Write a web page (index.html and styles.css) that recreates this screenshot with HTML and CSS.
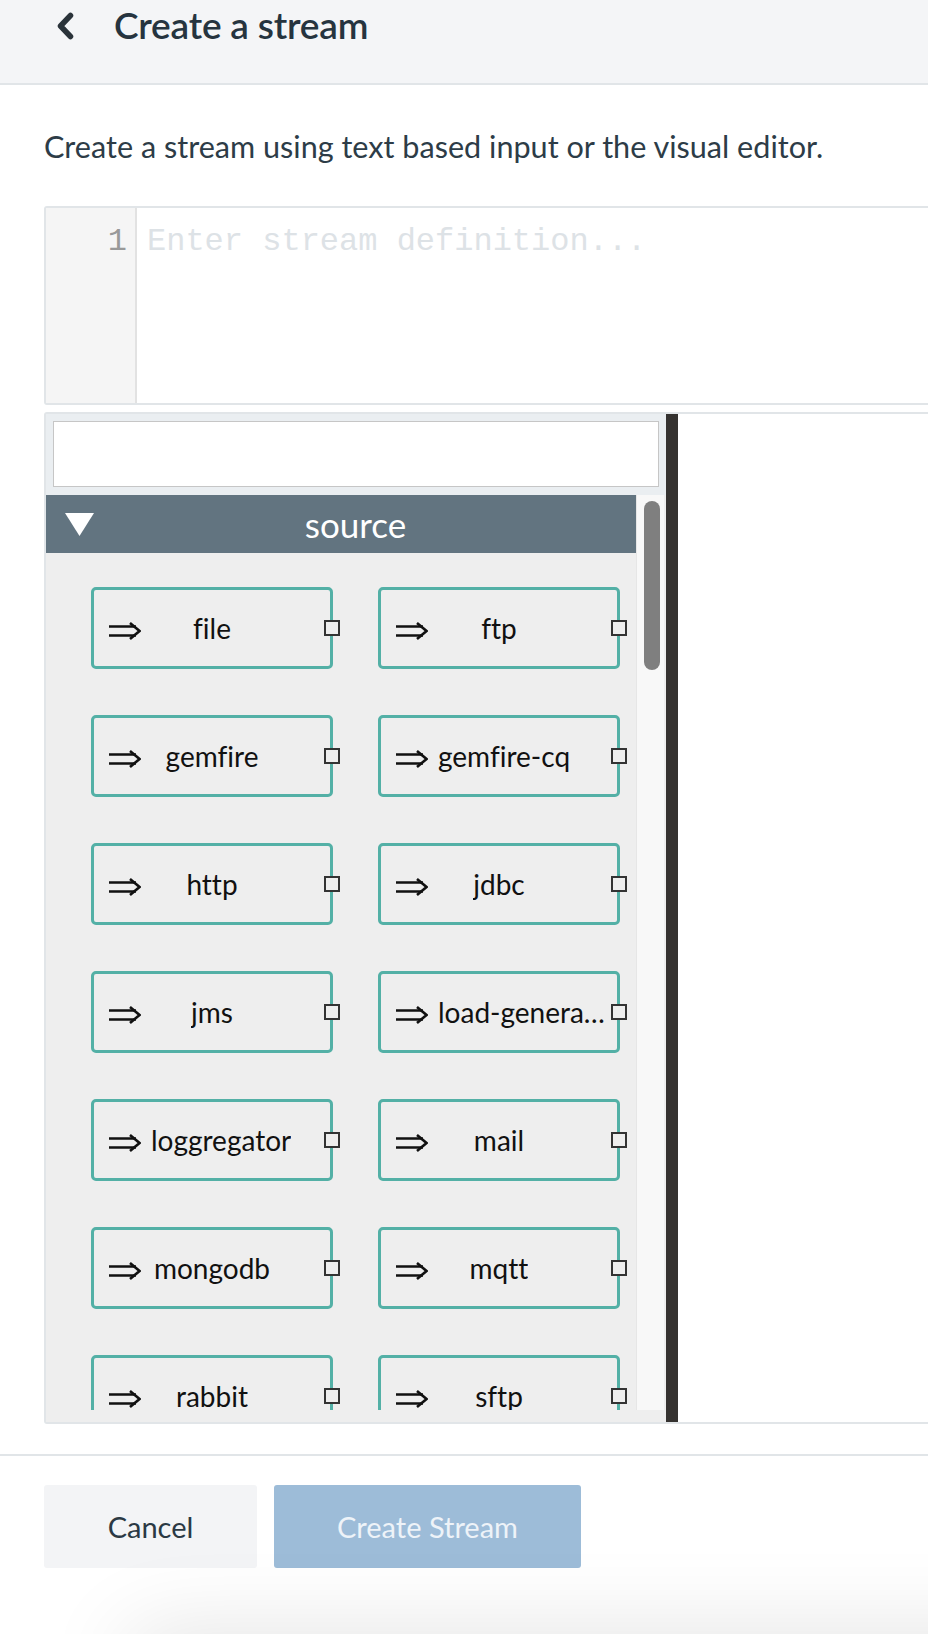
FILE: index.html
```html
<!DOCTYPE html>
<html lang="en">
<head>
<meta charset="utf-8">
<title>Create a stream</title>
<link rel="stylesheet" href="styles.css">
</head>
<body>
<div class="page">
  <header class="topbar">
    <svg class="back" width="20" height="28" viewBox="0 0 20 28" aria-hidden="true">
      <polyline points="15.5,3.5 5.5,14 15.5,24.5" fill="none" stroke="#2a333a" stroke-width="5.5" stroke-linecap="round" stroke-linejoin="round"/>
    </svg>
    <h1 class="title">Create a stream</h1>
  </header>

  <p class="intro">Create a stream using text based input or the visual editor.</p>

  <div class="editor">
    <div class="gutter"><span class="lineno">1</span></div>
    <div class="code"><span class="placeholder">Enter stream definition...</span></div>
  </div>

  <div class="flow">
    <div class="palette">
      <div class="search"><input class="search-input" type="text" aria-label="Filter"></div>
      <div class="palette-body">
        <div class="list">
          <div class="group-header">
            <svg class="caret" width="29" height="23" viewBox="0 0 29 23" aria-hidden="true"><polygon points="0,0 29,0 14.5,23" fill="#ffffff"/></svg>
            <span class="group-name">source</span>
          </div>
          <div class="nodes">
            <div class="node"><span class="node-icon"><svg width="32" height="18" viewBox="0 0 32 18"><path d="M0 4.5H27M0 13.5H27" stroke="#111" stroke-width="2.3"/><polyline points="21,1 30.5,9 21,17" fill="none" stroke="#111" stroke-width="2.6"/></svg></span><span class="node-label">file</span><span class="node-pad"></span><span class="port"></span></div>
            <div class="node"><span class="node-icon"><svg width="32" height="18" viewBox="0 0 32 18"><path d="M0 4.5H27M0 13.5H27" stroke="#111" stroke-width="2.3"/><polyline points="21,1 30.5,9 21,17" fill="none" stroke="#111" stroke-width="2.6"/></svg></span><span class="node-label">ftp</span><span class="node-pad"></span><span class="port"></span></div>
            <div class="node"><span class="node-icon"><svg width="32" height="18" viewBox="0 0 32 18"><path d="M0 4.5H27M0 13.5H27" stroke="#111" stroke-width="2.3"/><polyline points="21,1 30.5,9 21,17" fill="none" stroke="#111" stroke-width="2.6"/></svg></span><span class="node-label">gemfire</span><span class="node-pad"></span><span class="port"></span></div>
            <div class="node"><span class="node-icon"><svg width="32" height="18" viewBox="0 0 32 18"><path d="M0 4.5H27M0 13.5H27" stroke="#111" stroke-width="2.3"/><polyline points="21,1 30.5,9 21,17" fill="none" stroke="#111" stroke-width="2.6"/></svg></span><span class="node-label">gemfire-cq</span><span class="node-pad"></span><span class="port"></span></div>
            <div class="node"><span class="node-icon"><svg width="32" height="18" viewBox="0 0 32 18"><path d="M0 4.5H27M0 13.5H27" stroke="#111" stroke-width="2.3"/><polyline points="21,1 30.5,9 21,17" fill="none" stroke="#111" stroke-width="2.6"/></svg></span><span class="node-label">http</span><span class="node-pad"></span><span class="port"></span></div>
            <div class="node"><span class="node-icon"><svg width="32" height="18" viewBox="0 0 32 18"><path d="M0 4.5H27M0 13.5H27" stroke="#111" stroke-width="2.3"/><polyline points="21,1 30.5,9 21,17" fill="none" stroke="#111" stroke-width="2.6"/></svg></span><span class="node-label">jdbc</span><span class="node-pad"></span><span class="port"></span></div>
            <div class="node"><span class="node-icon"><svg width="32" height="18" viewBox="0 0 32 18"><path d="M0 4.5H27M0 13.5H27" stroke="#111" stroke-width="2.3"/><polyline points="21,1 30.5,9 21,17" fill="none" stroke="#111" stroke-width="2.6"/></svg></span><span class="node-label">jms</span><span class="node-pad"></span><span class="port"></span></div>
            <div class="node"><span class="node-icon"><svg width="32" height="18" viewBox="0 0 32 18"><path d="M0 4.5H27M0 13.5H27" stroke="#111" stroke-width="2.3"/><polyline points="21,1 30.5,9 21,17" fill="none" stroke="#111" stroke-width="2.6"/></svg></span><span class="node-label">load-generator</span><span class="node-pad"></span><span class="port"></span></div>
            <div class="node"><span class="node-icon"><svg width="32" height="18" viewBox="0 0 32 18"><path d="M0 4.5H27M0 13.5H27" stroke="#111" stroke-width="2.3"/><polyline points="21,1 30.5,9 21,17" fill="none" stroke="#111" stroke-width="2.6"/></svg></span><span class="node-label">loggregator</span><span class="node-pad"></span><span class="port"></span></div>
            <div class="node"><span class="node-icon"><svg width="32" height="18" viewBox="0 0 32 18"><path d="M0 4.5H27M0 13.5H27" stroke="#111" stroke-width="2.3"/><polyline points="21,1 30.5,9 21,17" fill="none" stroke="#111" stroke-width="2.6"/></svg></span><span class="node-label">mail</span><span class="node-pad"></span><span class="port"></span></div>
            <div class="node"><span class="node-icon"><svg width="32" height="18" viewBox="0 0 32 18"><path d="M0 4.5H27M0 13.5H27" stroke="#111" stroke-width="2.3"/><polyline points="21,1 30.5,9 21,17" fill="none" stroke="#111" stroke-width="2.6"/></svg></span><span class="node-label">mongodb</span><span class="node-pad"></span><span class="port"></span></div>
            <div class="node"><span class="node-icon"><svg width="32" height="18" viewBox="0 0 32 18"><path d="M0 4.5H27M0 13.5H27" stroke="#111" stroke-width="2.3"/><polyline points="21,1 30.5,9 21,17" fill="none" stroke="#111" stroke-width="2.6"/></svg></span><span class="node-label">mqtt</span><span class="node-pad"></span><span class="port"></span></div>
            <div class="node"><span class="node-icon"><svg width="32" height="18" viewBox="0 0 32 18"><path d="M0 4.5H27M0 13.5H27" stroke="#111" stroke-width="2.3"/><polyline points="21,1 30.5,9 21,17" fill="none" stroke="#111" stroke-width="2.6"/></svg></span><span class="node-label">rabbit</span><span class="node-pad"></span><span class="port"></span></div>
            <div class="node"><span class="node-icon"><svg width="32" height="18" viewBox="0 0 32 18"><path d="M0 4.5H27M0 13.5H27" stroke="#111" stroke-width="2.3"/><polyline points="21,1 30.5,9 21,17" fill="none" stroke="#111" stroke-width="2.6"/></svg></span><span class="node-label">sftp</span><span class="node-pad"></span><span class="port"></span></div>
            <div class="node"><span class="node-icon"><svg width="32" height="18" viewBox="0 0 32 18"><path d="M0 4.5H27M0 13.5H27" stroke="#111" stroke-width="2.3"/><polyline points="21,1 30.5,9 21,17" fill="none" stroke="#111" stroke-width="2.6"/></svg></span><span class="node-label">syslog</span><span class="node-pad"></span><span class="port"></span></div>
            <div class="node"><span class="node-icon"><svg width="32" height="18" viewBox="0 0 32 18"><path d="M0 4.5H27M0 13.5H27" stroke="#111" stroke-width="2.3"/><polyline points="21,1 30.5,9 21,17" fill="none" stroke="#111" stroke-width="2.6"/></svg></span><span class="node-label">tcp</span><span class="node-pad"></span><span class="port"></span></div>
          </div>
        </div>
        <div class="track"><div class="thumb"></div></div>
      </div>
    </div>
    <div class="divider"></div>
    <div class="canvas"></div>
  </div>

  <div class="footer-rule"></div>

  <div class="actions">
    <button class="btn btn-cancel" type="button">Cancel</button>
    <button class="btn btn-primary" type="button" disabled>Create Stream</button>
  </div>
</div>
<div class="shade"></div>
</body>
</html>
```
FILE: styles.css
```css
html, body {
  margin: 0;
  padding: 0;
  background: #ffffff;
  overflow: hidden;
}

body {
  font-family: Lato, "Open Sans", "Liberation Sans", sans-serif;
  color: #2d3c47;
  font-variant-ligatures: none;
}

.page {
  width: 928px;
  height: 1634px;
  overflow: hidden;
}

/* ---------- top bar ---------- */
.topbar {
  display: flex;
  align-items: flex-start;
  height: 83px;
  box-sizing: content-box;
  padding: 0 0 0 55px;
  background: #f4f5f7;
  border-bottom: 2px solid #e1e5e8;
}

.back {
  display: block;
  margin-top: 12px;
  flex: none;
}

.title {
  margin: 5px 0 0 39px;
  font-size: 37px;
  line-height: 40px;
  font-weight: 600;
  color: #26343f;
  letter-spacing: -0.2px;
}

/* ---------- intro ---------- */
.intro {
  margin: 42px 0 39px 44px;
  font-size: 30.6px;
  line-height: 40px;
  color: #2d3c47;
}

/* ---------- text editor ---------- */
.editor {
  display: flex;
  height: 195px;
  margin: 0 -20px 0 44px;
  border: 2px solid #e1e5e8;
  border-radius: 3px;
  background: #ffffff;
  font-family: "Liberation Mono", "DejaVu Sans Mono", monospace;
  font-size: 32px;
  line-height: 36px;
}

.gutter {
  width: 91px;
  flex: none;
  box-sizing: border-box;
  padding: 16px 8px 0 0;
  text-align: right;
  background: #f5f5f5;
  border-right: 2px solid #e2e2e2;
}

.lineno {
  color: #999999;
}

.code {
  flex: 1;
  padding: 16px 0 0 10px;
}

.placeholder {
  color: #dde2e6;
}

/* ---------- flow editor ---------- */
.flow {
  display: flex;
  height: 1008px;
  margin: 7px -20px 0 44px;
  border: 2px solid #e1e5e8;
  border-radius: 3px;
}

.palette {
  width: 620px;
  flex: none;
  display: flex;
  flex-direction: column;
  background: #eeeeee;
  padding-bottom: 12px;
}

.search {
  height: 81px;
  box-sizing: border-box;
  padding: 7px 7px 8px;
  background: #eaeef1;
}

.search-input {
  display: block;
  width: 100%;
  height: 66px;
  box-sizing: border-box;
  margin: 0;
  border: 1px solid #c6c6c6;
  background: #ffffff;
}

.palette-body {
  display: flex;
  height: 915px;
}

.list {
  width: 590px;
  flex: none;
  overflow: hidden;
}

.group-header {
  display: flex;
  align-items: center;
  height: 58px;
  padding: 0 19px;
  background: #627480;
}

.caret {
  display: block;
  flex: none;
}

.group-name {
  flex: 1;
  text-align: center;
  color: #ffffff;
  font-size: 35px;
  line-height: 40px;
}

.nodes {
  display: grid;
  grid-template-columns: repeat(2, 242px);
  grid-auto-rows: 82px;
  column-gap: 45px;
  row-gap: 46px;
  padding: 34px 0 0 45px;
}

.node {
  position: relative;
  display: flex;
  align-items: center;
  box-sizing: border-box;
  border: 3px solid #53b0a6;
  border-radius: 5px;
  background: #eeeeee;
  color: #111111;
  font-size: 28px;
}

.node-icon {
  width: 57px;
  flex: none;
  box-sizing: border-box;
  padding: 6px 0 0 15px;
  display: flex;
}

.node-icon svg {
  display: block;
}

.node-label {
  flex: 0 0 auto;
  max-width: 174px;
  margin: 0 auto;
  white-space: nowrap;
  overflow: hidden;
  text-overflow: ellipsis;
}

.node-pad {
  flex: 0 1 57px;
  min-width: 5px;
}

.port {
  position: absolute;
  right: -10px;
  top: 50%;
  width: 16px;
  height: 16px;
  box-sizing: border-box;
  margin-top: -8px;
  border: 2px solid #333333;
  background: #eeeeee;
}

.track {
  width: 27px;
  flex: none;
  border-left: 1px solid #e6e6e6;
  background: #f8f8f8;
}

.thumb {
  width: 16px;
  height: 169px;
  margin: 6px 0 0 7px;
  border-radius: 8px;
  background: #7f7f7f;
}

.divider {
  width: 12px;
  flex: none;
  background: #353230;
}

.canvas {
  flex: 1;
  background: #ffffff;
}

/* ---------- footer ---------- */
.footer-rule {
  height: 2px;
  margin-top: 30px;
  background: #e1e5e8;
}

.actions {
  display: flex;
  gap: 17px;
  padding: 29px 0 0 44px;
}

.btn {
  height: 83px;
  margin: 0;
  border: none;
  border-radius: 3px;
  font-family: Lato, "Open Sans", "Liberation Sans", sans-serif;
  font-size: 29px;
  cursor: pointer;
}

.btn-cancel {
  width: 213px;
  background: #f3f4f6;
  color: #2b3944;
}

.btn-primary {
  width: 307px;
  background: #9dbcd8;
  color: #eef3f8;
}

.shade {
  position: fixed;
  left: 130px;
  right: -200px;
  bottom: -80px;
  height: 80px;
  background: #eeeeee;
  box-shadow: 0 0 90px 0 rgba(0, 0, 0, 0.12);
}
```
